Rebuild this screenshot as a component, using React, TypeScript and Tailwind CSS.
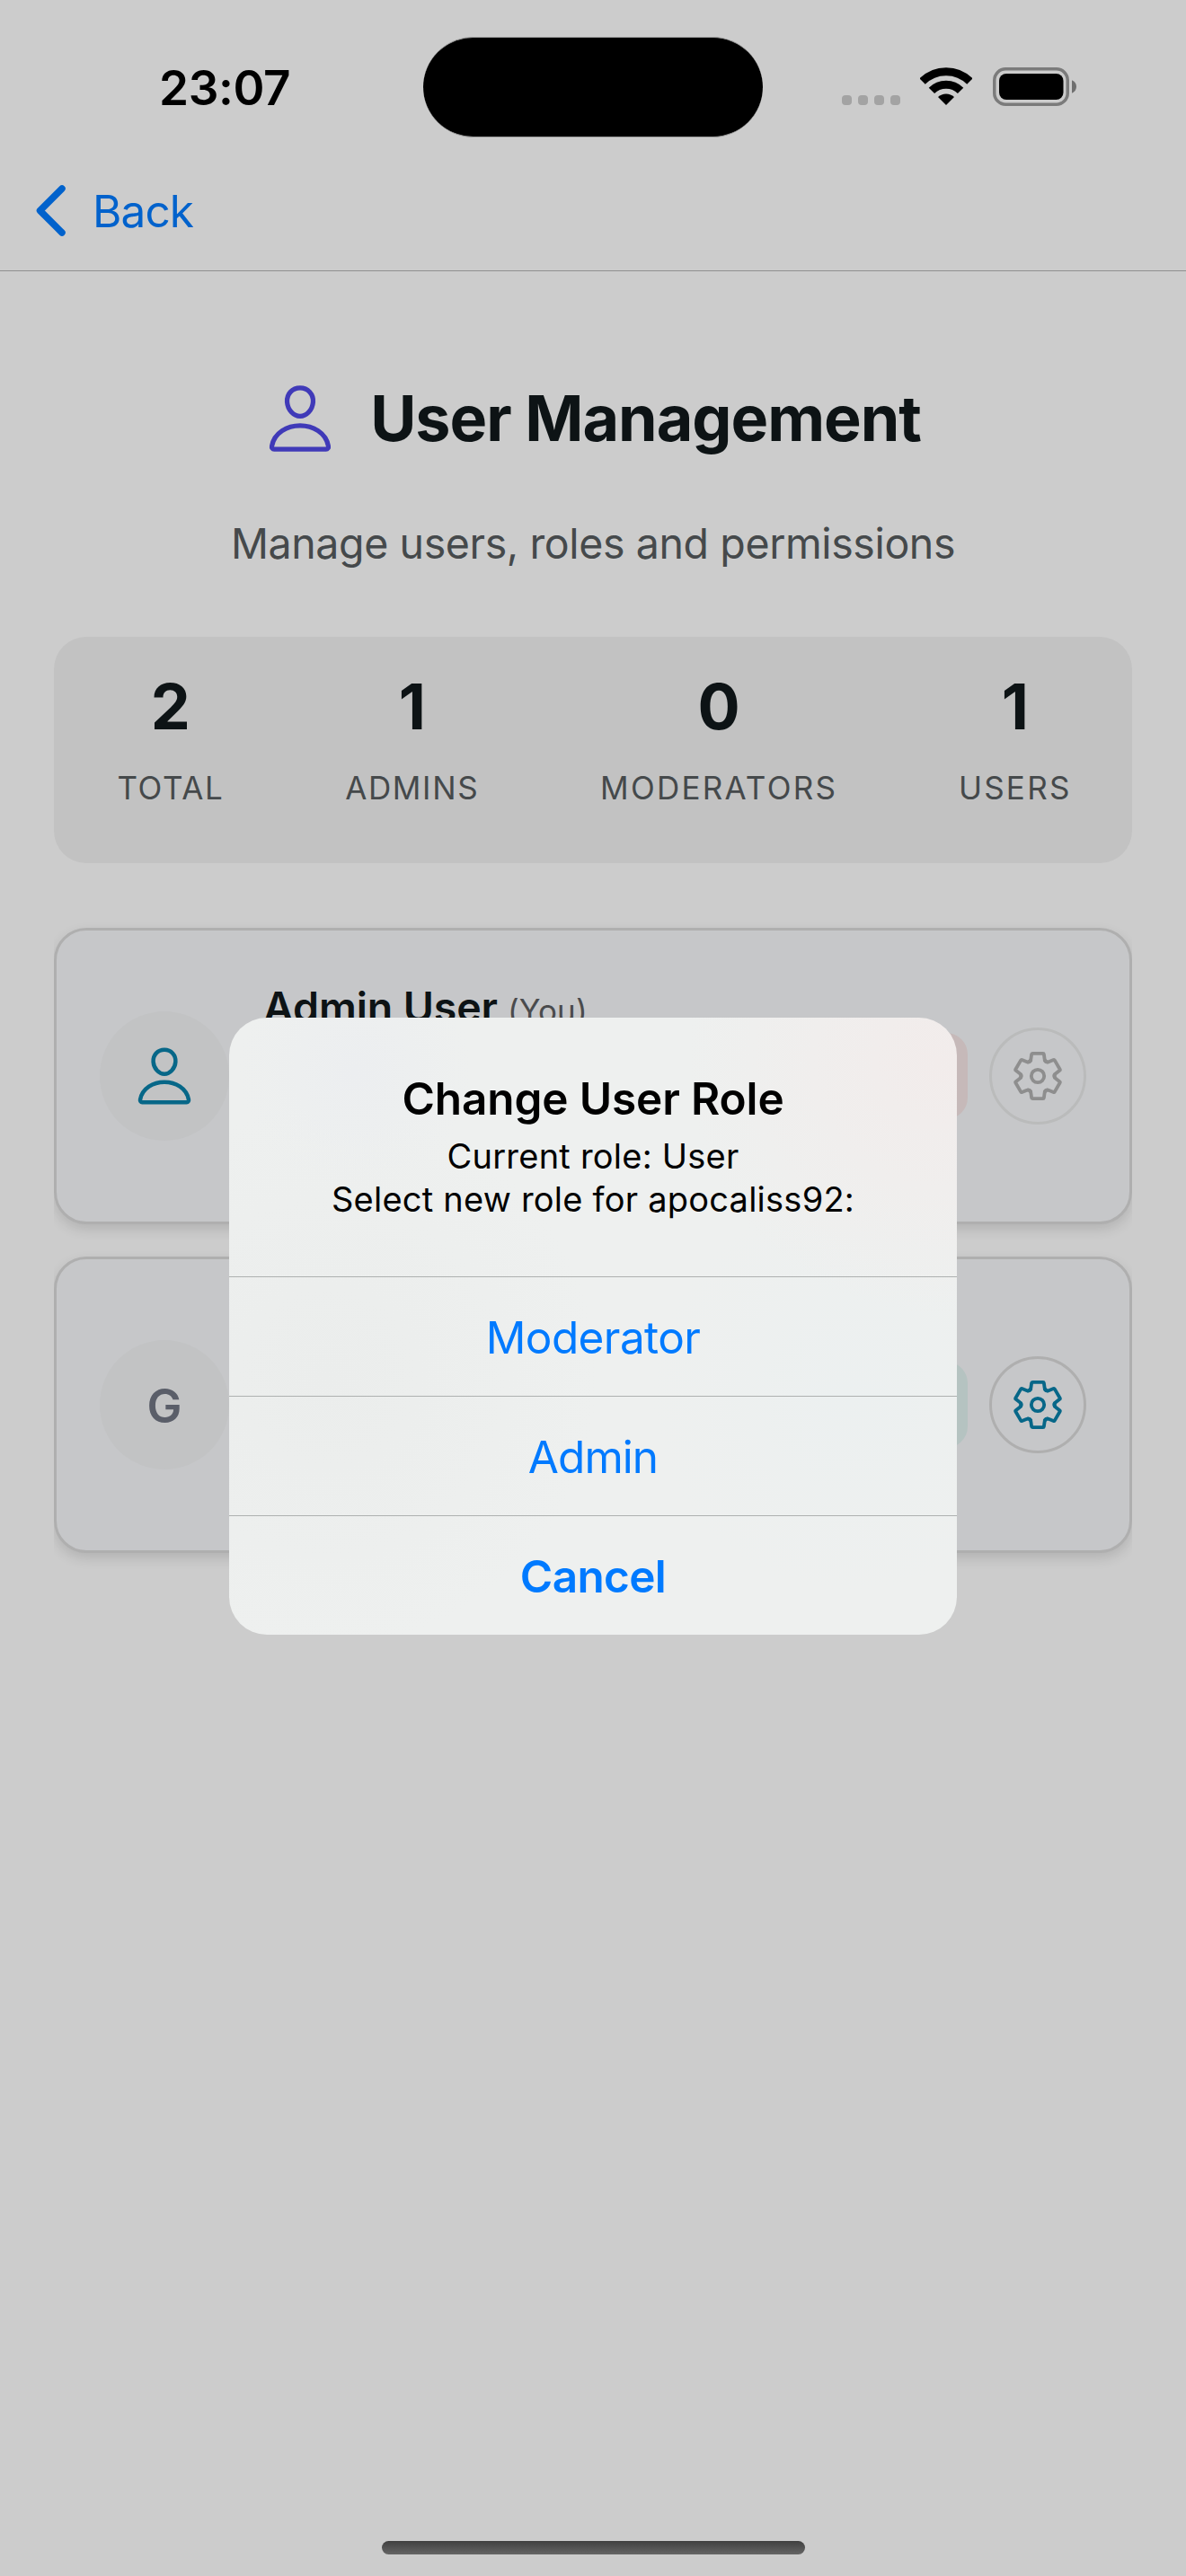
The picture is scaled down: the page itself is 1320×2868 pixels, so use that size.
import { IoPersonOutline } from "react-icons/io5";

const stats = [
  { value: "2", label: "TOTAL", tracking: "tracking-[1.64px]" },
  { value: "1", label: "ADMINS", tracking: "tracking-[1.64px]" },
  { value: "0", label: "MODERATORS", tracking: "tracking-[2.24px]" },
  { value: "1", label: "USERS", tracking: "tracking-[2.24px]" },
];

function WifiIcon() {
  return (
    <svg className="ml-[22px] h-[42px] w-[58px]" viewBox="0 0 58 42" fill="none">
      <path d="M2.6 15.6A37.4 37.4 0 0 1 55.4 15.6" stroke="#000" strokeWidth="9" />
      <path d="M12.9 25.9A22.8 22.8 0 0 1 45.1 25.9" stroke="#000" strokeWidth="9" />
      <path d="M29 42L20 33A13 13 0 0 1 38 33Z" fill="#000" />
    </svg>
  );
}

function BatteryIcon() {
  return (
    <svg className="ml-[23px] h-[43px] w-[94px]" viewBox="0 0 94 43" fill="none">
      <rect x="1.75" y="1.75" width="81.5" height="39.5" rx="12.5" stroke="#7b7b7b" strokeWidth="3.5" />
      <rect x="7" y="7" width="71.5" height="29" rx="8" fill="#000" />
      <path d="M88 14.3C91 15.4 93 18.2 93 21.5S91 27.6 88 28.7Z" fill="#6f6f6f" />
    </svg>
  );
}

const toothAngles = [0, 60, 120, 180, 240, 300];

function GearIcon() {
  return (
    <svg
      className="size-[54px]"
      viewBox="-81 -81 162 162"
      fill="none"
      stroke="currentColor"
      strokeWidth="11.5"
      strokeLinecap="round"
      strokeLinejoin="round"
    >
      {toothAngles.map((angle) => (
        <path
          key={angle}
          transform={`rotate(${angle})`}
          d="M-33 -46.3C-27 -47 -23.6 -50.5 -22.8 -57L-20.6 -72.6Q-20.2 -75.2 -17.6 -75.2H17.6Q20.2 -75.2 20.6 -72.6L22.8 -57C23.6 -50.5 27 -47 33 -46.3"
        />
      ))}
      <circle r="21.5" />
    </svg>
  );
}

function StatusBar() {
  return (
    <div className="grid h-[168px] grid-cols-[471px_378px_1fr] items-start">
      <div className="pt-[71px] pl-[177px] text-[53px] leading-[54px] font-semibold tracking-[-0.39px] text-black">
        23:07
      </div>
      <div className="mt-[41px] h-[112px] rounded-[56px] border-y border-[#999] bg-black" />
      <div className="flex items-start pt-[75px] pl-[88px]">
        <div className="mt-[31px] flex gap-[7px]">
          <span className="h-[11px] w-[11px] rounded-[4px] bg-[#a3a3a3]" />
          <span className="h-[11px] w-[11px] rounded-[4px] bg-[#a3a3a3]" />
          <span className="h-[11px] w-[11px] rounded-[4px] bg-[#a3a3a3]" />
          <span className="h-[11px] w-[11px] rounded-[4px] bg-[#a3a3a3]" />
        </div>
        <WifiIcon />
        <BatteryIcon />
      </div>
    </div>
  );
}

function NavBar() {
  return (
    <div className="flex h-[134px] items-center border-b border-[#8f8f8f] pl-10 text-[#0162cc]">
      <svg className="h-[57px] w-[33px]" viewBox="0 0 33 57" fill="none">
        <path
          d="M29 4L4.5 28.5L29 53"
          stroke="currentColor"
          strokeWidth="7.5"
          strokeLinecap="round"
          strokeLinejoin="round"
        />
      </svg>
      <span className="ml-[30px] pt-px text-[49.5px] leading-[61px] tracking-[-0.9px]">Back</span>
    </div>
  );
}

function UserCard({ self }: { self: boolean }) {
  return (
    <div className="flex h-[330px] items-center rounded-[36px] border-[3px] border-[#afafaf] bg-[#c6c7c9] px-12 shadow-[0_6px_14px_rgba(0,0,0,0.12)]">
      <div className="flex size-36 shrink-0 items-center justify-center rounded-full bg-[#c2c3c4]">
        {self ? (
          <IoPersonOutline className="size-[72px] text-[#076788]" />
        ) : (
          <span className="pt-[3px] text-[52px] leading-[64px] font-semibold text-[#5a5e69]">G</span>
        )}
      </div>
      <div className="ml-[38px] h-[214px] flex-1">
        {self && (
          <div className="flex items-baseline gap-[11px]">
            <span className="text-[46.5px] leading-[60px] font-semibold tracking-[-0.12px] text-[#0d1315]">
              Admin User
            </span>
            <span className="text-[35px] leading-[44px] tracking-[0.12px] text-[#4a4b4d]">(You)</span>
          </div>
        )}
      </div>
      <div className={self ? "h-24 w-[150px] rounded-3xl bg-[#c6b9b9]" : "h-24 w-[150px] rounded-3xl bg-[#b5c3c1]"} />
      <div
        className={
          self
            ? "ml-6 flex size-[108px] items-center justify-center rounded-full border-[3px] border-[#babbbb] text-[#8e8e8e]"
            : "ml-6 flex size-[108px] items-center justify-center rounded-full border-[3px] border-[#afafaf] text-[#076788]"
        }
      >
        <GearIcon />
      </div>
    </div>
  );
}

function RoleDialog() {
  return (
    <div
      role="dialog"
      className="absolute top-[1133px] left-[255px] w-[810px] overflow-hidden rounded-[42px] bg-[#eef0ef] bg-[radial-gradient(circle_at_790px_50px,#f2eceb_0px,transparent_280px),radial-gradient(circle_at_140px_60px,#eceef0_0px,transparent_130px),radial-gradient(circle_at_110px_400px,#ebedec_0px,transparent_300px),radial-gradient(circle_at_690px_420px,#ecf0f0_0px,transparent_220px)] text-center"
    >
      <div className="h-[288px] pt-[59px] text-black">
        <h2 className="text-[49.5px] leading-[62px] font-semibold tracking-[-0.13px]">Change User Role</h2>
        <p className="mt-[9px] text-[38px] leading-[48px] tracking-[0.23px]">
          Current role: User
          <br />
          Select new role for apocaliss92:
        </p>
      </div>
      <div className="flex flex-col text-[49.5px] text-[#007aff]">
        <button className="h-[133px] border-t border-[#aeb1b0] pt-[2px] tracking-[-0.61px]">Moderator</button>
        <button className="h-[133px] border-t border-[#aeb1b0] pt-[2px] tracking-[-0.95px]">Admin</button>
        <button className="h-[133px] border-t border-[#aeb1b0] pt-[2px] font-semibold tracking-[-0.66px]">
          Cancel
        </button>
      </div>
    </div>
  );
}

export default function App() {
  return (
    <div className="relative flex h-[2868px] w-[1320px] flex-col overflow-hidden bg-[#cccccc] font-[Inter,sans-serif]">
      <StatusBar />
      <NavBar />
      <main className="px-[60px] pt-[122px]">
        <div className="flex h-[84px] items-center justify-center gap-9 pr-[3px]">
          <IoPersonOutline className="size-[84px] text-[#403ab8]" />
          <h1 className="text-[70px] leading-[84px] font-bold tracking-[-1.02px] text-[#0d1315]">User Management</h1>
        </div>
        <p className="mt-[67px] text-center text-[46.5px] leading-[60px] tracking-[-0.39px] text-[#45494b]">
          Manage users, roles and permissions
        </p>
        <div className="mt-[74px] flex h-[252px] justify-around rounded-[36px] bg-[#c2c2c2] pt-9 pl-[3px]">
          {stats.map((stat) => (
            <div key={stat.label} className="flex flex-col items-center">
              <span className="text-[70px] leading-[84px] font-bold text-[#0d1315]">{stat.value}</span>
              <span className={`mt-[26px] text-[35px] leading-[44px] text-[#45494b] ${stat.tracking}`}>
                {stat.label}
              </span>
            </div>
          ))}
        </div>
        <div className="mt-[72px] flex flex-col gap-9 overflow-x-clip">
          <UserCard self />
          <UserCard self={false} />
        </div>
      </main>
      <div className="mx-auto mt-auto mb-6 h-[15px] w-[471px] rounded-full bg-linear-to-b from-[#404040] to-[#656565]" />
      <RoleDialog />
    </div>
  );
}
